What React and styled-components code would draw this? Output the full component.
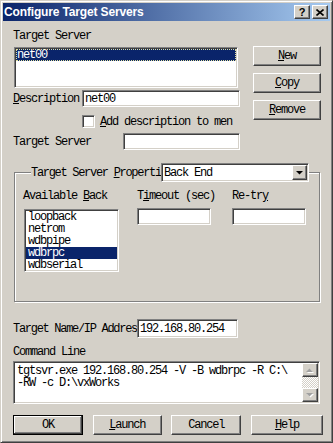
import React from "react";
import styled, { createGlobalStyle, css } from "styled-components";

const MONO = `"Liberation Mono", "DejaVu Sans Mono", monospace`;
const SANS = `"Liberation Sans", Arial, sans-serif`;

const GlobalStyle = createGlobalStyle`
  html, body { margin: 0; padding: 0; background: #d4d0c8; }
  body { font-family: ${MONO}; font-size: 12px; }
  *, *::before, *::after { box-sizing: border-box; }
`;

const sunken = css`
  border: 1px solid;
  border-color: #808080 #ffffff #ffffff #808080;
  box-shadow: inset 1px 1px 0 #404040, inset -1px -1px 0 #d4d0c8;
`;

const raised = css`
  border: 1px solid;
  border-color: #ffffff #404040 #404040 #ffffff;
  box-shadow: inset -1px -1px 0 #808080, inset 1px 1px 0 #d4d0c8;
`;

const Window = styled.div`
  width: 333px;
  height: 443px;
  background: #d4d0c8;
  border: 1px solid;
  border-color: #d4d0c8 #404040 #404040 #d4d0c8;
  box-shadow: inset 1px 1px 0 #ffffff, inset -1px -1px 0 #808080;
  padding: 2px;
  display: flex;
  flex-direction: column;
  font-family: ${MONO};
  font-size: 12px;
  letter-spacing: -1.2px;
  line-height: 12px;
  color: #000;
`;

const TitleBar = styled.div`
  height: 18px;
  flex: none;
  display: flex;
  align-items: center;
  justify-content: space-between;
  background: linear-gradient(to right, #0a246a, #a6caf0);
  padding: 0 2px 0 1px;
`;

const Title = styled.div`
  font-family: ${SANS};
  font-weight: bold;
  font-size: 12px;
  letter-spacing: -0.15px;
  color: #ffffff;
  white-space: nowrap;
`;

const CapButtons = styled.div`
  display: flex;
  gap: 2px;
`;

const CapButton = styled.div`
  ${raised};
  width: 16px;
  height: 14px;
  background: #d4d0c8;
  display: flex;
  align-items: center;
  justify-content: center;
  font-family: ${SANS};
  font-weight: bold;
  font-size: 11px;
  letter-spacing: 0;
  line-height: 1;
  color: #000;
`;

const Body = styled.div`
  flex: 1;
  display: flex;
  flex-direction: column;
  padding: 9px 0 0 10px;
`;

const TopRow = styled.div`
  display: flex;
  align-items: flex-start;
`;

const LeftCol = styled.div`
  width: 228px;
  display: flex;
  flex-direction: column;
`;

const Label = styled.div`
  height: 12px;
  line-height: 12px;
  white-space: nowrap;
  overflow: hidden;
  flex: none;
  width: ${(p) => (p.$w ? `${p.$w}px` : "auto")};
  margin-top: ${(p) => p.$mt || 0}px;
  letter-spacing: ${(p) => (p.$tight ? "-1.3px" : "inherit")};
`;

const U = styled.span`
  text-decoration: underline;
  text-underline-offset: 1px;
`;

const ListBox = styled.div`
  ${sunken};
  background: #ffffff;
  width: ${(p) => p.$w}px;
  height: ${(p) => p.$h}px;
  margin-top: ${(p) => p.$mt || 0}px;
  margin-left: ${(p) => (p.$ml === undefined ? 1 : p.$ml)}px;
  padding: 1px;
  flex: none;
`;

const Item = styled.div`
  height: 12px;
  line-height: 12px;
  padding-left: ${(p) => p.$pl || 1}px;
  white-space: nowrap;
  background: ${(p) => (p.$selected ? "#0a246a" : "transparent")};
  color: ${(p) => (p.$selected ? "#ffffff" : "#000000")};
  outline: ${(p) => (p.$focus ? "1px dotted #e0e0a0" : "none")};
  outline-offset: -1px;
`;

const FieldRow = styled.div`
  display: flex;
  align-items: center;
  margin-top: ${(p) => p.$mt || 0}px;
`;

const TextBox = styled.div`
  ${sunken};
  background: #ffffff;
  width: ${(p) => p.$w}px;
  height: ${(p) => p.$h || 17}px;
  padding: 0 2px;
  display: flex;
  align-items: center;
  white-space: nowrap;
  flex: none;
`;

const CheckRow = styled.div`
  display: flex;
  align-items: center;
  gap: 5px;
  margin-top: 8px;
  padding-left: 69px;
`;

const CheckBox = styled.div`
  ${sunken};
  background: #ffffff;
  width: 13px;
  height: 13px;
  flex: none;
`;

const ButtonCol = styled.div`
  margin-left: 12px;
  padding-top: 16px;
  display: flex;
  flex-direction: column;
  gap: 7px;
`;

const PushButton = styled.div`
  ${(p) =>
    p.$default
      ? css`
          border: 1px solid #000000;
          box-shadow: inset -1px -1px 0 #404040, inset 1px 1px 0 #ffffff,
            inset -2px -2px 0 #808080;
        `
      : raised};
  width: ${(p) => p.$w}px;
  height: 20px;
  background: #d4d0c8;
  display: flex;
  align-items: center;
  justify-content: center;
  white-space: nowrap;
  flex: none;
`;

const Group = styled.fieldset`
  margin: 13px 0 0 1px;
  width: 306px;
  min-inline-size: 0;
  padding: 8px 0 29px 9px;
  border: 1px solid #808080;
  box-shadow: 1px 1px 0 #ffffff, inset 1px 1px 0 #ffffff;
`;

const Legend = styled.legend`
  padding: 0;
  margin-left: 7px;
  display: flex;
  align-items: center;
  background: #d4d0c8;
`;

const LegendText = styled.div`
  width: 130px;
  overflow: hidden;
  white-space: nowrap;
  letter-spacing: -1.3px;
`;

const Combo = styled.div`
  ${sunken};
  width: 148px;
  height: 19px;
  background: #ffffff;
  display: flex;
  align-items: center;
  justify-content: space-between;
  padding: 1px 1px 1px 2px;
`;

const DropButton = styled.div`
  ${raised};
  width: 15px;
  height: 15px;
  background: #d4d0c8;
  display: flex;
  align-items: center;
  justify-content: center;
`;

const GroupGrid = styled.div`
  display: grid;
  grid-template-columns: 113px 95px 74px;
  grid-template-rows: 12px auto;
  row-gap: 6px;
  align-items: start;
`;

const Cell = styled.div`
  margin-left: ${(p) => p.$ml || 0}px;
  white-space: nowrap;
`;

const CmdBox = styled.div`
  ${sunken};
  margin-top: 3px;
  width: 307px;
  height: 43px;
  background: #ffffff;
  display: flex;
  padding: 1px;
`;

const CmdText = styled.div`
  flex: 1;
  padding: 2px 0 0 2px;
  white-space: pre;
  line-height: 12px;
`;

const ScrollBar = styled.div`
  width: 16px;
  display: flex;
  flex-direction: column;
`;

const ScrollBtn = styled.div`
  ${raised};
  height: 14px;
  background: #d4d0c8;
  display: flex;
  align-items: center;
  justify-content: center;
`;

const Track = styled.div`
  flex: 1;
  background: repeating-conic-gradient(#ffffff 0 25%, #d4d0c8 0 50%) 0 0 / 2px 2px;
`;

const BottomRow = styled.div`
  margin-top: 11px;
  width: 310px;
  display: flex;
  justify-content: space-between;
`;

const Arrow = () => (
  <svg width="7" height="4" viewBox="0 0 7 4">
    <polygon points="0,0 7,0 3.5,3.5" fill="#000" />
  </svg>
);

const DisabledArrow = ({ up }) => (
  <svg width="8" height="5" viewBox="0 0 8 5">
    <polygon points={up ? "1,5 8,5 4.5,1.5" : "1,1 8,1 4.5,4.5"} fill="#ffffff" />
    <polygon points={up ? "0,4 7,4 3.5,0.5" : "0,0 7,0 3.5,3.5"} fill="#a0a0a0" />
  </svg>
);

const CloseGlyph = () => (
  <svg width="8" height="7" viewBox="0 0 8 7">
    <path d="M0.5 0.5 L7.5 6.5 M7.5 0.5 L0.5 6.5" stroke="#000" strokeWidth="1.6" />
  </svg>
);

export default function App() {
  return (
    <>
      <GlobalStyle />
      <Window>
        <TitleBar>
          <Title>Configure Target Servers</Title>
          <CapButtons>
            <CapButton>?</CapButton>
            <CapButton>
              <CloseGlyph />
            </CapButton>
          </CapButtons>
        </TitleBar>
        <Body>
          <TopRow>
            <LeftCol>
              <Label>Target Server</Label>
              <ListBox $w={224} $h={41} $mt={5}>
                <Item $selected $focus>net00</Item>
              </ListBox>
              <FieldRow $mt={2}>
                <Label $w={69}>
                  <U>D</U>escription
                </Label>
                <TextBox $w={158}>net00</TextBox>
              </FieldRow>
              <CheckRow>
                <CheckBox />
                <span>
                  <U>A</U>dd description to men
                </span>
              </CheckRow>
              <FieldRow $mt={5}>
                <Label $w={110}>Target Server</Label>
                <TextBox $w={117} />
              </FieldRow>
            </LeftCol>
            <ButtonCol>
              <PushButton $w={68}>
                <U>N</U>ew
              </PushButton>
              <PushButton $w={68}>
                <U>C</U>opy
              </PushButton>
              <PushButton $w={68}>
                <U>R</U>emove
              </PushButton>
            </ButtonCol>
          </TopRow>

          <Group>
            <Legend>
              <LegendText>
                Target Server <U>P</U>roperti
              </LegendText>
              <Combo>
                <span>Back End</span>
                <DropButton>
                  <Arrow />
                </DropButton>
              </Combo>
            </Legend>
            <GroupGrid>
              <Cell $ml={-1}>
                Available <U>B</U>ack
              </Cell>
              <Cell>
                T<U>i</U>meout (sec)
              </Cell>
              <Cell>
                Re-tr<U>y</U>
              </Cell>
              <ListBox $w={95} $h={63} $mt={1} $ml={0}>
                <Item $pl={2}>loopback</Item>
                <Item $pl={2}>netrom</Item>
                <Item $pl={2}>wdbpipe</Item>
                <Item $pl={2} $selected>wdbrpc</Item>
                <Item $pl={2}>wdbserial</Item>
              </ListBox>
              <TextBox $w={74} />
              <TextBox $w={74} />
            </GroupGrid>
          </Group>

          <FieldRow $mt={17}>
            <Label $w={124} $tight>
              Tar<U>g</U>et Name/IP Addres
            </Label>
            <TextBox $w={101} $h={19}>192.168.80.254</TextBox>
          </FieldRow>

          <Label $mt={8}>Command Line</Label>
          <CmdBox>
            <CmdText>{"tgtsvr.exe 192.168.80.254 -V -B wdbrpc -R C:\\\n-RW -c D:\\vxWorks"}</CmdText>
            <ScrollBar>
              <ScrollBtn>
                <DisabledArrow up />
              </ScrollBtn>
              <Track />
              <ScrollBtn>
                <DisabledArrow />
              </ScrollBtn>
            </ScrollBar>
          </CmdBox>

          <BottomRow>
            <PushButton $w={70} $default>
              OK
            </PushButton>
            <PushButton $w={69}>
              <U>L</U>aunch
            </PushButton>
            <PushButton $w={70}>Cancel</PushButton>
            <PushButton $w={72}>
              <U>H</U>elp
            </PushButton>
          </BottomRow>
        </Body>
      </Window>
    </>
  );
}
